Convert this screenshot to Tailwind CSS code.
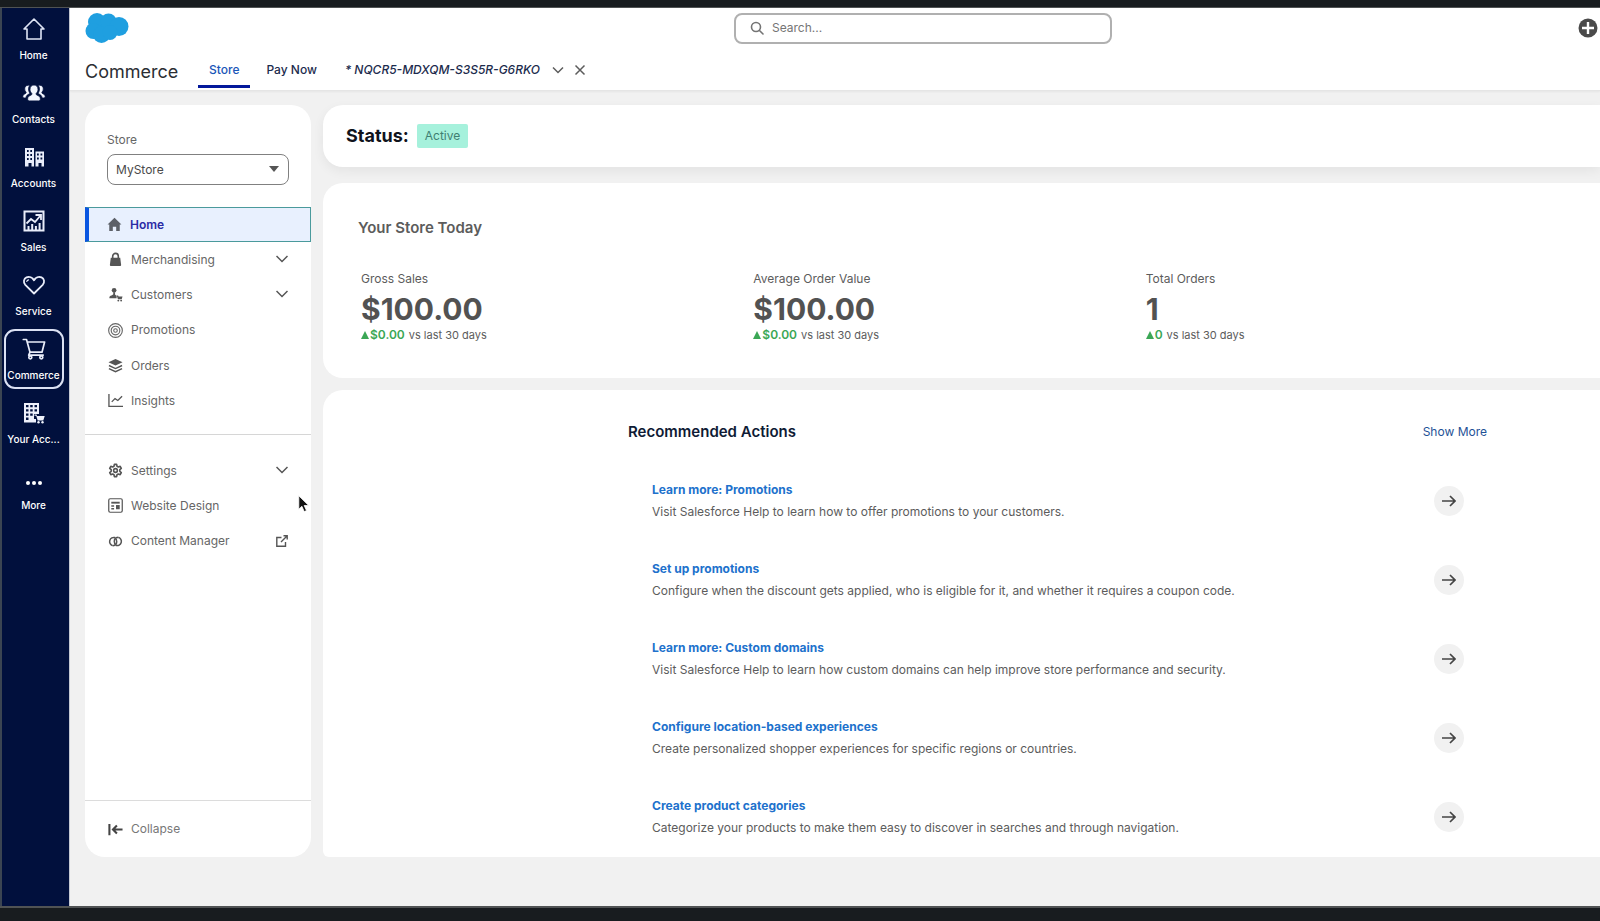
<!DOCTYPE html>
<html lang="en">
<head>
  <meta charset="UTF-8">
  <title>Commerce - Store</title>
  <meta name="viewport" content="width=device-width, initial-scale=1.0">
  <script src="https://cdn.jsdelivr.net/npm/@tailwindcss/browser@4"></script>
  <style>
    body { font-family: 'Inter', 'Liberation Sans', sans-serif; }
  </style>
</head>
<body class="bg-[#181c1f] min-h-screen flex flex-col pt-[7px] pb-[13px] text-[#5c5c5c] overflow-x-hidden">
  <div class="flex flex-1 border-t border-b-2 border-[#505354]">

    <!-- App rail -->
    <nav class="w-[70px] shrink-0 bg-[#01103d] border-l-2 border-l-[#3b4552] border-r border-r-[#c4c8d2] text-white text-[10px] font-medium">
      <ul class="flex flex-col gap-1 items-center pt-px pr-1">
        <li><a href="#" class="flex flex-col items-center w-[60px] h-[60px] pt-2">
          <svg class="w-6 h-6" viewBox="0 0 24 24" fill="none" stroke="#dfe5f5" stroke-width="1.6" stroke-linejoin="round" stroke-linecap="round"><path d="M2 12 12 2l10 10h-3v10H5V12z"/></svg>
          <span class="mt-1.5 leading-4">Home</span></a></li>
        <li><a href="#" class="flex flex-col items-center w-[60px] h-[60px] pt-2">
          <svg class="w-6 h-6" viewBox="0 0 24 24" fill="#f3f6ff" stroke="#01103d" stroke-width=".8"><path d="M6.500 4.200c.5 0 .9.100 1.200.3-1.500 1.900-1.500 4.800-.2 7.200l.4.900c-1.900.9-3.800 1.800-4 4.400H2c-.7 0-1.200-.5-1.200-1.200 0-2 1.400-2.700 2.900-3.400.5-.3.600-.9.300-1.300-.8-.8-1.300-1.900-1.300-3.200 0-2.200 1.400-3.700 3.800-3.700z"/><path d="M17.500 4.200c-.5 0-.9.100-1.200.3 1.500 1.900 1.500 4.800.2 7.200l-.4.900c1.900.9 3.800 1.800 4 4.400H22c.7 0 1.200-.5 1.200-1.200 0-2-1.400-2.700-2.900-3.400-.5-.3-.6-.9-.3-1.300.8-.8 1.300-1.900 1.300-3.200 0-2.200-1.400-3.700-3.800-3.700z"/><path d="M12 4c2.600 0 4 1.900 4 4.300 0 1.700-.8 3.100-1.700 4-.4.500-.2 1.300.4 1.600 1.800.8 3.600 1.600 3.600 3.700v.9c0 .8-.6 1.400-1.400 1.400H7.100c-.8 0-1.400-.6-1.400-1.400v-.9c0-2.100 1.800-2.900 3.600-3.700.6-.3.800-1.100.4-1.600-.9-.9-1.700-2.300-1.700-4C8 5.900 9.400 4 12 4z"/></svg>
          <span class="mt-1.5 leading-4">Contacts</span></a></li>
        <li><a href="#" class="flex flex-col items-center w-[60px] h-[60px] pt-2">
          <svg class="w-6 h-6" viewBox="0 0 24 24" fill="#e9edfa" fill-rule="evenodd"><path d="M3 3h9v18.500H9.500V18h-3v3.500H3zM5 5v2h1.700V5zm3.300 0v2H10V5zM5 9v2h1.700V9zm3.300 0v2H10V9zM5 13v2h1.700v-2zm3.300 0v2H10v-2zM13.500 6.500H22v15h-2.500V18h-3v3.500h-3zM15 8.500v2h1.800v-2zm3.500 0v2h1.800v-2zM15 12.500v2h1.800v-2zm3.500 0v2h1.800v-2z"/></svg>
          <span class="mt-1.5 leading-4">Accounts</span></a></li>
        <li><a href="#" class="flex flex-col items-center w-[60px] h-[60px] pt-2">
          <svg class="w-6 h-6" viewBox="0 0 24 24" fill="none" stroke="#e9edfa" stroke-width="2"><path d="M2.500 2.500h19v19h-19z"/><path d="M4.500 14.500 9 10l4 3 5.500-6.500M13.500 6h5.500v5" stroke-width="1.800"/><path d="M6.500 21v-4M10.200 21v-6M13.900 21v-4M17.600 21v-7"/></svg>
          <span class="mt-1.5 leading-4">Sales</span></a></li>
        <li><a href="#" class="flex flex-col items-center w-[60px] h-[60px] pt-2">
          <svg class="w-6 h-6" viewBox="0 0 24 24" fill="none" stroke="#e9edfa" stroke-width="1.800" stroke-linejoin="round" stroke-linecap="round"><path d="M12 20.500 3.300 11.800C1 9.300 1.700 5.600 4.500 4.400 7.300 3.200 10.500 4.400 12 7.200c1.500-2.800 4.700-4 7.500-2.800 2.800 1.200 3.500 4.900 1.200 7.400z"/><path d="M4.800 8.500c.2-1 .8-1.500 1.700-1.700" stroke-width="1.200"/></svg>
          <span class="mt-1.5 leading-4">Service</span></a></li>
        <li><a href="#" aria-current="page" class="flex flex-col items-center w-[60px] h-[60px] pt-1.5 border-2 border-[#dbe1f3] rounded-[11px]">
          <svg class="w-6 h-6" viewBox="0 0 24 24" fill="none" stroke="#e9edfa" stroke-width="1.700" stroke-linejoin="round" stroke-linecap="round"><path d="M1.300 2.500h3.200l3.500 12.700h12L22.600 5H5.200"/><path d="M8 15.200l-1.300 2.900h14.500"/><circle cx="8.300" cy="20.300" r="1.500"/><circle cx="19.300" cy="20.300" r="1.500"/></svg>
          <span class="mt-1.5 leading-4">Commerce</span></a></li>
        <li><a href="#" class="flex flex-col items-center w-[60px] h-[60px] pt-2">
          <svg class="w-6 h-6" viewBox="0 0 24 24" fill="#eef1fb" fill-rule="evenodd"><path d="M2 2h15v11h-5v5h2v3.500H2zM4 4v2.300h2.500V4zm4.200 0v2.300h2.500V4zm4.300 0v2.300H15V4zM4 8.200v2.300h2.500V8.200zm4.200 0v2.300h2.500V8.200zm4.300 0v2.300H15V8.200zM4 12.400v2.300h2.500v-2.300zm4.200 0v2.300h2.500v-2.300zM4 16.600v2.300h2.500v-2.300z"/><path d="M12.500 13.500h2l.6 1.500h7.600l-1.400 4.500h-5.600l-1.500-4.800h-1.700z"/><circle cx="16.500" cy="21.300" r="1.200"/><circle cx="20.500" cy="21.300" r="1.200"/></svg>
          <span class="mt-1.5 leading-4">Your Acc...</span></a></li>
        <li><button type="button" class="flex flex-col items-center w-[60px] h-[60px] pt-3.5">
          <svg class="w-6 h-6" viewBox="0 0 24 24" fill="#fff"><circle cx="6" cy="12" r="2"/><circle cx="12" cy="12" r="2"/><circle cx="18" cy="12" r="2"/></svg>
          <span class="mt-0.5 leading-4">More</span></button></li>
      </ul>
    </nav>

    <div class="flex-1 min-w-0 flex flex-col bg-[#f1f1f1]">

      <!-- Header -->
      <header class="bg-white pl-[15px] h-[83px] border-b border-[#e5e5e5] shadow-xs">
        <div class="grid grid-cols-[649fr_378fr_488fr] items-center h-10">
          <svg class="w-11 h-8" viewBox="0 0 44 32" fill="#1f9fe0"><circle cx="12" cy="10" r="9"/><circle cx="23.500" cy="9.500" r="8"/><circle cx="34" cy="14.500" r="9.500"/><circle cx="8.500" cy="19" r="8"/><circle cx="16.500" cy="22.500" r="8.500"/><circle cx="25" cy="20.500" r="7.500"/></svg>
          <label class="flex items-center h-[31px] border-2 border-[#b0b0b0] rounded-lg pl-3.5 gap-2">
            <svg class="w-3.5 h-3.5" viewBox="0 0 14 14" fill="none" stroke="#747474" stroke-width="1.600" stroke-linecap="round"><circle cx="6" cy="6" r="4.500"/><path d="m9.500 9.500 3.500 3.500"/></svg>
            <input type="search" aria-label="Search" placeholder="Search..." class="flex-1 min-w-0 text-xs outline-none placeholder:text-[#757575]">
          </label>
          <button type="button" aria-label="Add" class="justify-self-end mr-0.5">
            <svg class="w-5 h-5" viewBox="0 0 20 20"><circle cx="10" cy="10" r="9.500" fill="#4a4a4a"/><path d="M10 4v12M4 10h12" stroke="#fff" stroke-width="2.400"/></svg>
          </button>
        </div>
        <div class="flex h-10 text-xs font-medium text-[#1c2b4d]">
          <h1 class="text-lg font-normal text-[#2b2e33] pt-2.5 leading-7 w-[113px]">Commerce</h1>
          <a href="#" class="px-[11px] pt-3 leading-5 text-[#1a56b8] border-b-3 border-[#03189b]">Store</a>
          <a href="#" class="px-4 pt-3 leading-5">Pay Now</a>
          <a href="#" class="pl-3 pt-3 leading-5 italic">* NQCR5-MDXQM-S3S5R-G6RKO</a>
          <button type="button" aria-label="Tab actions" class="ml-3 pt-1"><svg class="w-3 h-3" viewBox="0 0 12 12" fill="none" stroke="#5c5c5c" stroke-width="1.500"><path d="m1 3.500 5 5 5-5"/></svg></button>
          <button type="button" aria-label="Close tab" class="ml-2.5 pt-1"><svg class="w-3 h-3" viewBox="0 0 12 12" fill="none" stroke="#5c5c5c" stroke-width="1.500"><path d="m1.500 1.500 9 9m0-9-9 9"/></svg></button>
        </div>
      </header>

      <div class="flex flex-1 gap-3 pl-[15px] pt-3.5 pb-[49px]">

        <!-- Store navigation -->
        <aside class="w-[226px] shrink-0 bg-white rounded-[20px] flex flex-col text-xs text-[#666]">
          <div class="px-[22px] pt-[25px]">
            <label for="store" class="block leading-5">Store</label>
            <div class="relative mt-1">
              <select id="store" class="appearance-none w-full h-[31px] border border-[#808080] rounded-lg pl-2 text-[#4a4a4a]">
                <option>MyStore</option>
              </select>
              <svg class="absolute right-2.5 top-3 w-2.5 h-1.5 pointer-events-none" viewBox="0 0 10 6" fill="#555"><path d="M0 0h10L5 6z"/></svg>
            </div>
          </div>
          <ul class="mt-[22px]">
            <li><a href="#" aria-current="page" class="flex items-center gap-2 h-[35px] pl-[18px] pr-[22px] border border-[#4a9a9c] border-l-4 border-l-[#0a56e0] bg-[#e8f0fe] text-[#2a2aa5] font-semibold">
              <svg class="w-[15px] h-[15px]" viewBox="0 0 16 16" fill="#5c6068"><path d="M8 .8 15.400 8H13.600v7H9.800v-4.500H6.200V15H2.400V8H.6z"/></svg>Home</a></li>
            <li><a href="#" class="flex items-center gap-2 h-[35px] px-[23px]">
              <svg class="w-[15px] h-[15px]" viewBox="0 0 16 16" fill="#555"><path d="M3 6h10l1 7.500c0 .8-.5 1.500-1.300 1.500H3.300C2.500 15 2 14.300 2 13.500z"/><path d="M5 8V4.500a3 3 0 0 1 6 0V8" fill="none" stroke="#555" stroke-width="1.700"/></svg><span class="flex-1">Merchandising</span>
              <svg class="w-3 h-3" viewBox="0 0 12 12" fill="none" stroke="#555" stroke-width="1.500"><path d="m.5 2 5.500 5.500L11.500 2"/></svg></a></li>
            <li><a href="#" class="flex items-center gap-2 h-[35px] px-[23px]">
              <svg class="w-[15px] h-[15px]" viewBox="0 0 16 16" fill="#555"><circle cx="6.500" cy="3.500" r="2.500"/><path d="M5.600 5.500h1.900v2.300c0 .8 1 1.100 1.700 1.500V12H1.500v-1c0-2 4.100-2 4.100-3.500zM9.300 9h1.500l.5 1H15.500l-.9 3h-4z"/><circle cx="11" cy="14.500" r="1"/><circle cx="14" cy="14.500" r="1"/></svg><span class="flex-1">Customers</span>
              <svg class="w-3 h-3" viewBox="0 0 12 12" fill="none" stroke="#555" stroke-width="1.500"><path d="m.5 2 5.500 5.500L11.500 2"/></svg></a></li>
            <li><a href="#" class="flex items-center gap-2 h-9 px-[23px]">
              <svg class="w-[15px] h-[15px]" viewBox="0 0 16 16" fill="none" stroke="#666" stroke-width="1.200"><circle cx="8" cy="8" r="7.300"/><circle cx="8" cy="8" r="4.600"/><circle cx="8" cy="8" r="1.900"/></svg>Promotions</a></li>
            <li><a href="#" class="flex items-center gap-2 h-[35px] px-[23px]">
              <svg class="w-[15px] h-[15px]" viewBox="0 0 16 16" fill="#555"><path d="M8 1l7.500 3.500L8 8 .5 4.500z"/><path d="m1 8 7 3.300L15 8M1 11.300l7 3.300 7-3.300" fill="none" stroke="#555" stroke-width="1.500"/></svg>Orders</a></li>
            <li><a href="#" class="flex items-center gap-2 h-[35px] px-[23px]">
              <svg class="w-[15px] h-[15px]" viewBox="0 0 16 16" fill="none" stroke="#555" stroke-width="1.400"><path d="M1 1v13.300h15"/><path d="M4 9.500 7.500 6l3 2L15 3.500"/></svg>Insights</a></li>
          </ul>
          <hr class="mt-4 border-[#d6d6d6]">
          <ul class="mt-[18px]">
            <li><a href="#" class="flex items-center gap-2 h-[35px] px-[23px]">
              <svg class="w-[15px] h-[15px]" viewBox="0 0 16 16" fill="none" stroke="#555" stroke-width="1.700" stroke-linejoin="round"><path d="M6.800 1.500h2.400l.4 2 1.400.8 2-.7 1.200 2.100-1.600 1.400v1.800l1.600 1.400-1.200 2.100-2-.7-1.400.8-.4 2H6.800l-.4-2-1.400-.8-2 .7-1.200-2.100 1.600-1.400V7.100L1.800 5.700 3 3.600l2 .7 1.400-.8z"/><circle cx="8" cy="8" r="2"/></svg><span class="flex-1">Settings</span>
              <svg class="w-3 h-3" viewBox="0 0 12 12" fill="none" stroke="#555" stroke-width="1.500"><path d="m.5 2 5.500 5.500L11.500 2"/></svg></a></li>
            <li><a href="#" class="flex items-center gap-2 h-[35px] px-[23px]">
              <svg class="w-[15px] h-[15px]" viewBox="0 0 16 16" fill="none" stroke="#555" stroke-width="1.300"><rect x=".8" y=".8" width="14.400" height="14.400" rx="1.500"/><path d="M3.500 5h9" stroke-width="2"/><path d="M3.500 8.500h3M3.500 11.500h3" stroke-width="1.500"/><path d="M8.500 7.500h4v4.500h-4z" fill="#555" stroke="none"/></svg>Website Design</a></li>
            <li><a href="#" class="flex items-center gap-2 h-9 px-[23px]">
              <svg class="w-[15px] h-[15px]" viewBox="0 0 16 16" fill="none" stroke="#555" stroke-width="1.600"><path d="M7.500 3.800A4.500 4.500 0 1 0 5 12.500M5.300 12.500a4.500 4.500 0 0 0 4-4.500c0-1.800-.8-3.200-2-4M8.500 12.200A4.500 4.500 0 1 0 11 3.500M10.700 3.500a4.500 4.500 0 0 0-4 4.500c0 1.800.8 3.200 2 4"/></svg><span class="flex-1">Content Manager</span>
              <svg class="w-3 h-3" viewBox="0 0 12 12" fill="none" stroke="#555" stroke-width="1.400"><path d="M5.500 2.500H.8v8.700h8.700V7M7.500.8h3.700v3.700M11 1 5 7"/></svg></a></li>
          </ul>
          <div class="mt-auto border-t border-[#dcdcdc] h-[57px]">
            <button type="button" class="flex items-center gap-2 h-14 px-[23px] text-[#777]">
              <svg class="w-[15px] h-[15px]" viewBox="0 0 16 16" fill="none" stroke="#444" stroke-width="2.200"><path d="M1.500 2v12M15.500 8H6M9.500 3.800 5.300 8l4.200 4.200"/></svg>Collapse</button>
          </div>
        </aside>

        <main class="flex-1 min-w-0 flex flex-col">
          <section class="bg-white rounded-l-[20px] h-[62px] flex items-center pl-[23px] gap-2 shadow-[0_4px_12px_rgba(0,0,0,0.06)]">
            <h2 class="text-lg font-bold text-[#10131c]">Status:</h2>
            <span class="bg-[#a6f1dc] text-[#3f7f72] text-xs leading-6 px-2 rounded-xs">Active</span>
          </section>

          <section class="bg-white rounded-l-[20px] mt-4 pl-[35px] pt-[35px] h-[195px]">
            <h2 class="text-[15px] leading-5 font-semibold">Your Store Today</h2>
            <div class="grid grid-cols-3 mt-[31px] pl-[3px] pr-[62px] text-xs">
              <div>
                <p class="leading-5">Gross Sales</p>
                <p class="text-[30px] leading-10 font-bold text-[#525252]">$100.00</p>
                <p class="flex items-center text-[11px] leading-3"><svg class="w-2 h-2 mr-px" viewBox="0 0 8 8" fill="#3ba755"><path d="M4 0l4 8H0z"/></svg><b class="text-xs leading-3 font-semibold text-[#3ba755] mr-1">$0.00</b>vs last 30 days</p>
              </div>
              <div>
                <p class="leading-5">Average Order Value</p>
                <p class="text-[30px] leading-10 font-bold text-[#525252]">$100.00</p>
                <p class="flex items-center text-[11px] leading-3"><svg class="w-2 h-2 mr-px" viewBox="0 0 8 8" fill="#3ba755"><path d="M4 0l4 8H0z"/></svg><b class="text-xs leading-3 font-semibold text-[#3ba755] mr-1">$0.00</b>vs last 30 days</p>
              </div>
              <div>
                <p class="leading-5">Total Orders</p>
                <p class="text-[30px] leading-10 font-bold text-[#525252]">1</p>
                <p class="flex items-center text-[11px] leading-3"><svg class="w-2 h-2 mr-px" viewBox="0 0 8 8" fill="#3ba755"><path d="M4 0l4 8H0z"/></svg><b class="text-xs leading-3 font-semibold text-[#3ba755] mr-1">0</b>vs last 30 days</p>
              </div>
            </div>
          </section>

          <section class="flex-1 bg-white rounded-tl-[20px] rounded-bl-md mt-3 pl-[305px] pr-[113px] pt-8">
            <div class="flex items-center justify-between">
              <h2 class="text-[15px] leading-5 font-semibold text-[#0f1b35]">Recommended Actions</h2>
              <a href="#" class="text-xs leading-5 text-[#1f5296]">Show More</a>
            </div>
            <ul class="mt-[37px] pl-6 pr-[23px] text-xs">
              <li class="flex items-center justify-between h-[79px] pb-[35px]">
                <div><a href="#" class="block leading-[22px] font-bold text-[#2071cc]">Learn more: Promotions</a>
                <p class="leading-[22px]">Visit Salesforce Help to learn how to offer promotions to your customers.</p></div>
                <button type="button" aria-label="Open Learn more: Promotions" class="w-[30px] h-[30px] rounded-full bg-[#f1f1f1] flex items-center justify-center"><svg class="w-3.5 h-3.5" viewBox="0 0 14 14" fill="none" stroke="#444" stroke-width="1.700"><path d="M0 7h13M8 2l5 5-5 5"/></svg></button>
              </li>
              <li class="flex items-center justify-between h-[79px] pb-[35px]">
                <div><a href="#" class="block leading-[22px] font-bold text-[#2071cc]">Set up promotions</a>
                <p class="leading-[22px]">Configure when the discount gets applied, who is eligible for it, and whether it requires a coupon code.</p></div>
                <button type="button" aria-label="Open Set up promotions" class="w-[30px] h-[30px] rounded-full bg-[#f1f1f1] flex items-center justify-center"><svg class="w-3.5 h-3.5" viewBox="0 0 14 14" fill="none" stroke="#444" stroke-width="1.700"><path d="M0 7h13M8 2l5 5-5 5"/></svg></button>
              </li>
              <li class="flex items-center justify-between h-[79px] pb-[35px]">
                <div><a href="#" class="block leading-[22px] font-bold text-[#2071cc]">Learn more: Custom domains</a>
                <p class="leading-[22px]">Visit Salesforce Help to learn how custom domains can help improve store performance and security.</p></div>
                <button type="button" aria-label="Open Learn more: Custom domains" class="w-[30px] h-[30px] rounded-full bg-[#f1f1f1] flex items-center justify-center"><svg class="w-3.5 h-3.5" viewBox="0 0 14 14" fill="none" stroke="#444" stroke-width="1.700"><path d="M0 7h13M8 2l5 5-5 5"/></svg></button>
              </li>
              <li class="flex items-center justify-between h-[79px] pb-[35px]">
                <div><a href="#" class="block leading-[22px] font-bold text-[#2071cc]">Configure location-based experiences</a>
                <p class="leading-[22px]">Create personalized shopper experiences for specific regions or countries.</p></div>
                <button type="button" aria-label="Open Configure location-based experiences" class="w-[30px] h-[30px] rounded-full bg-[#f1f1f1] flex items-center justify-center"><svg class="w-3.5 h-3.5" viewBox="0 0 14 14" fill="none" stroke="#444" stroke-width="1.700"><path d="M0 7h13M8 2l5 5-5 5"/></svg></button>
              </li>
              <li class="flex items-center justify-between h-11">
                <div><a href="#" class="block leading-[22px] font-bold text-[#2071cc]">Create product categories</a>
                <p class="leading-[22px]">Categorize your products to make them easy to discover in searches and through navigation.</p></div>
                <button type="button" aria-label="Open Create product categories" class="w-[30px] h-[30px] rounded-full bg-[#f1f1f1] flex items-center justify-center"><svg class="w-3.5 h-3.5" viewBox="0 0 14 14" fill="none" stroke="#444" stroke-width="1.700"><path d="M0 7h13M8 2l5 5-5 5"/></svg></button>
              </li>
            </ul>
          </section>
        </main>
      </div>
    </div>
  </div>

  <!-- Mouse pointer -->
  <svg class="absolute left-[298px] top-[495px] w-3 h-[18px] pointer-events-none" viewBox="0 0 12 18" fill="#111" stroke="#fff" stroke-width=".8"><path d="M.8.8v13.400l3.100-2.900 2.300 5.300 2.300-1-2.300-5.100h4.500z"/></svg>
</body>
</html>
